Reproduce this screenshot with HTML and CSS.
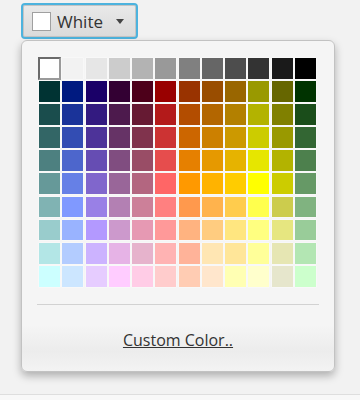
FILE: index.html
```html
<!DOCTYPE html>
<html lang="en">
<head>
    <meta charset="UTF-8">
    <meta name="viewport" content="width=device-width, initial-scale=1.0">
    <title>Color Picker</title>
    <link rel="stylesheet" href="styles.css">
</head>
<body>
    <div id="picker">
        <button class="picker-button">
            <span class="current-swatch"></span>
            <span class="current-name">White</span>
            <span class="arrow"></span>
        </button>

        <div class="popup">
            <div id="palette"></div>
            <div class="separator"></div>
            <div class="custom">
                <a class="custom-link">Custom Color..</a>
            </div>
        </div>
    </div>

    <script>
        // 12 x 10 palette, first row is greys
        let colors = [
            "#ffffff", "#f2f2f2", "#e6e6e6", "#cccccc", "#b3b3b3", "#999999", "#808080", "#666666", "#4d4d4d", "#333333", "#1a1a1a", "#000000",
            "#003333", "#001a80", "#1a0068", "#330033", "#4d001a", "#990000", "#993300", "#994d00", "#996600", "#999900", "#666600", "#003300",
            "#1a4d4d", "#1a3399", "#331a80", "#4d1a4d", "#661a33", "#b31a1a", "#b34d00", "#b36600", "#b38000", "#b3b300", "#808000", "#1a4d1a",
            "#336666", "#334db3", "#4d3399", "#663366", "#80334d", "#cc3333", "#cc6600", "#cc8000", "#cc9900", "#cccc00", "#999900", "#336633",
            "#4d8080", "#4d66cc", "#664db3", "#804d80", "#994d66", "#e64d4d", "#e68000", "#e69900", "#e6b300", "#e6e600", "#b3b300", "#4d804d",
            "#669999", "#6680e6", "#8066cc", "#996699", "#b36680", "#ff6666", "#ff9900", "#ffb300", "#ffcc00", "#ffff00", "#cccc00", "#669966",
            "#80b3b3", "#8099ff", "#9980e6", "#b380b3", "#cc8099", "#ff8080", "#ff994d", "#ffb34d", "#ffcc4d", "#ffff4d", "#cccc4d", "#80b380",
            "#99cccc", "#99b3ff", "#b399ff", "#cc99cc", "#e699b3", "#ff9999", "#ffb380", "#ffcc80", "#ffe680", "#ffff80", "#e6e680", "#99cc99",
            "#b3e6e6", "#b3ccff", "#ccb3ff", "#e6b3e6", "#e6b3cc", "#ffb3b3", "#ffb399", "#ffe6b3", "#ffe699", "#ffff99", "#e6e6b3", "#b3e6b3",
            "#ccffff", "#cce6ff", "#e6ccff", "#ffccff", "#ffcce6", "#ffcccc", "#ffccb3", "#ffe6cc", "#ffffb3", "#ffffcc", "#e6e6cc", "#ccffcc"
        ];

        let palette = document.getElementById("palette");

        colors.forEach((color, i) => {
            let cell = document.createElement("div");
            cell.className = i === 0 ? "cell selected" : "cell";
            cell.style.backgroundColor = color;
            palette.appendChild(cell);
        });
    </script>
</body>
</html>
```

FILE: styles.css
```css
html {
    background-color: #f8f8f8;
}

body {
    font-family: "Open Sans", "DejaVu Sans", sans-serif;
    margin: 0;
    height: 394px;
    background-color: #f2f2f2;
    border-bottom: 1px solid #dedede;
}

#picker {
    padding: 3px 0 0 21px;
}

.picker-button {
    display: flex;
    align-items: center;
    box-sizing: border-box;
    width: 117px;
    height: 36px;
    padding: 0 0 0 9px;
    margin: 0;
    border: 2px solid #4db3de;
    border-radius: 4px;
    background: linear-gradient(#e9e9e9, #dadada);
    box-shadow: inset 0 0 0 1px #c4c4c4;
    font-family: inherit;
    cursor: pointer;
}

.current-swatch {
    box-sizing: border-box;
    width: 19px;
    height: 19px;
    background-color: #fff;
    border: 1px solid #a0a0a0;
}

.current-name {
    margin-left: 6px;
    font-size: 17px;
    color: #333;
}

.arrow {
    width: 0;
    height: 0;
    margin-left: 13px;
    margin-top: 1px;
    border-left: 4.5px solid transparent;
    border-right: 4.5px solid transparent;
    border-top: 5px solid #444;
}

.popup {
    box-sizing: border-box;
    width: 314px;
    margin-top: 1px;
    padding: 17px 17px 17px 17px;
    background: linear-gradient(#f5f5f5 86%, #ececec 94%, #f3f3f3);
    border: 1px solid #c2c2c2;
    border-radius: 6px;
    box-shadow: 0 4px 9px rgba(0, 0, 0, 0.28);
}

#palette {
    display: grid;
    grid-template-columns: repeat(12, 1fr);
    grid-auto-rows: 20.8px;
    gap: 2.3px;
    width: 277px;
}

.cell {
    box-shadow: 0 0 0 0.5px rgba(255, 255, 255, 0.6);
}

.cell.selected {
    box-sizing: border-box;
    margin: -1px;
    border: 2px solid #6a6a6a;
    border-right-color: #9a9a9a;
    border-bottom-color: #9a9a9a;
    box-shadow: none;
}

.separator {
    height: 1px;
    margin: 17px -2px 0 -2px;
    background-color: #d2d2d2;
}

.custom {
    padding: 24px 0 3px 0;
    text-align: center;
    line-height: 22px;
}

.custom-link {
    font-size: 16px;
    color: #333;
    text-decoration: underline;
    cursor: pointer;
}
```
